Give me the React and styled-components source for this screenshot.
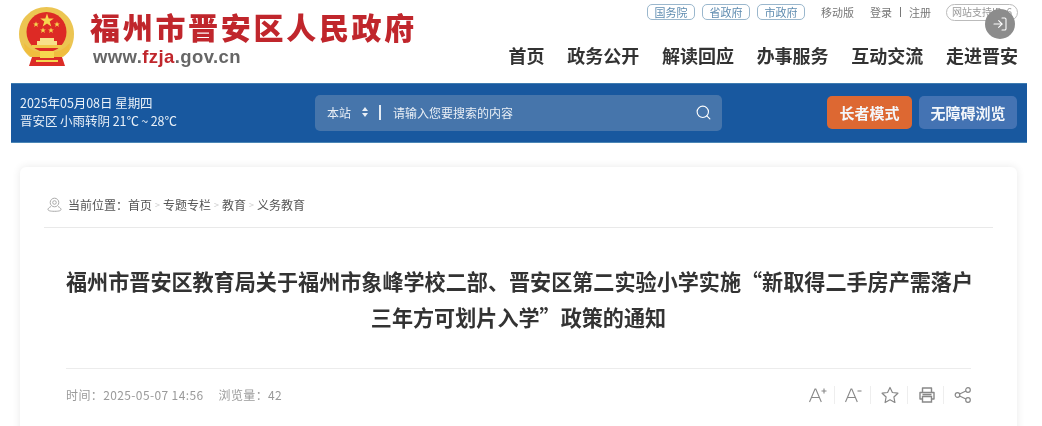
import React from "react";
import styled, { createGlobalStyle } from "styled-components";
import { LogIn, Search } from "lucide-react";

const Global = createGlobalStyle`
  html, body { margin: 0; padding: 0; background: #fff; overflow: hidden; }
  * { box-sizing: border-box; }
  body { font-family: "Liberation Sans", "Noto Sans CJK SC", sans-serif; }
`;
const Page = styled.div`
  width: 1042px; height: 426px; overflow: hidden; position: relative; background: #fff;
  filter: blur(0.45px);
`;
const Header = styled.header`
  height: 83px; padding: 0 24px 0 19px; display: flex; justify-content: space-between;
`;
const Brand = styled.div`
  display: flex; gap: 15px; padding-top: 7px;
`;
const BrandText = styled.div`
  display: flex; flex-direction: column;
`;
const SiteName = styled.div`
  font: 900 30px/38px "Noto Sans CJK SC", sans-serif; color: #c0262c; letter-spacing: 2.7px; white-space: nowrap;
`;
const SiteUrl = styled.div`
  font: 700 18.5px/24px "Liberation Sans", sans-serif; color: #666; margin: 0 0 0 3px; letter-spacing: 0.4px;
  b { color: #c0262c; }
`;
const HeaderRight = styled.div`
  display: flex; flex-direction: column; align-items: flex-end;
`;
const TopLinks = styled.div`
  display: flex; align-items: center; height: 24px; font-size: 11px; color: #777;
  font-family: "Noto Sans CJK SC", sans-serif;
`;
const GovPill = styled.a`
  width: 48px; height: 16px; border: 1px solid #9ab7cd; border-radius: 5px; color: #5f8cb0;
  display: flex; align-items: center; justify-content: center; margin-right: 7px; line-height: 1;
`;
const TopText = styled.a`
  margin-left: ${(p) => p.$ml}px; white-space: nowrap; color: #777; line-height: 1;
`;
const Sep = styled.i`
  width: 1px; height: 10px; background: #777; margin: 0 8px;
`;
const SupportPill = styled.a`
  width: 72px; height: 17px; margin-left: 15px; border: 1px solid #bbb; border-radius: 9px;
  font-size: 10px; color: #999; display: flex; align-items: center; justify-content: center; white-space: nowrap; line-height: 1;
`;
const Nav = styled.nav`
  display: flex; gap: 22.7px; margin: 19px 0 0 0; font: 700 18px/24px "Noto Sans CJK SC", sans-serif; color: #333;
`;
const FloatBtn = styled.div`
  position: absolute; left: 985px; top: 9px; width: 30px; height: 30px; border-radius: 50%;
  background: #8c8c8c; display: flex; align-items: center; justify-content: center; color: #fff;
`;
const Bar = styled.div`
  margin: 0 15px 0 11px; height: 60px; background: #18589f; display: flex; align-items: center; padding: 0 10px 2px 9px;
  font-family: "Noto Sans CJK SC", sans-serif; border-bottom: 1px solid #4b86b5; border-top: 1px solid #3d7bb0;
`;
const DateBox = styled.div`
  width: 295px; color: #eaf1f8; font-size: 12.5px; line-height: 18px; white-space: nowrap; letter-spacing: -0.05px;
`;
const SearchBox = styled.div`
  width: 407px; height: 36px; margin-top: 2px; background: #4675ab; border-radius: 5px; display: flex; align-items: center;
  padding: 0 10px 2px 12px; color: #e8eef5; font-size: 12px;
`;
const Scope = styled.span`
  width: 24px; white-space: nowrap;
`;
const Updown = styled.svg`
  margin-left: 11px; width: 6px; height: 10px;
`;
const Divider = styled.i`
  width: 2px; height: 15px; background: #e4ecf4; margin: 0 12px 0 11px;
`;
const Placeholder = styled.span`
  flex: 1; color: #e8eef5;
`;
const Mode = styled.div`
  height: 33px; width: ${(p) => p.$w}px; margin-left: ${(p) => p.$ml}px; border-radius: 5px; background: ${(p) => p.$bg};
  color: #fff; font-weight: 700; font-size: 15px; display: flex; align-items: center; justify-content: center; white-space: nowrap; opacity: .95;
`;
const Card = styled.main`
  margin: 24px 25px 0 20px; height: 300px; border-radius: 6px 6px 0 0; background: #fff;
  box-shadow: 0 0 8px rgba(0,0,0,.09); padding: 0 24px;
  font-family: "Noto Sans CJK SC", sans-serif;
`;
const Crumbs = styled.div`
  height: 61px; padding: 15px 0 0 3px; border-bottom: 1px solid #e9e9e9; display: flex; align-items: center; font-size: 12px; color: #555;
`;
const CrumbSep = styled.span`
  color: #ccc; font-size: 9px; width: 11px; text-align: center;
`;
const PinIcon = styled.svg`
  margin-right: 6px; flex: none;
`;
const Title = styled.h1`
  margin: 35px 22px 0; font-size: 21.1px; line-height: 36px; font-weight: 700; text-align: center; color: #333;
  height: 106px; border-bottom: 1px solid #ececec; white-space: nowrap;
`;
const Meta = styled.div`
  margin: 0 22px; height: 50px; display: flex; align-items: center; justify-content: space-between; font-size: 12px; color: #9a9a9a;
`;
const MetaInfo = styled.div`
  display: flex; gap: 15px; letter-spacing: 0.38px;
`;
const Tools = styled.div`
  display: flex; align-items: center; margin-top: 2px;
`;
const Tool = styled.span`
  display: flex; align-items: center; height: 18px; width: ${(p) => (p.$first ? 25.5 : p.$last ? 28 : 36.3)}px;
  padding-left: ${(p) => (p.$first ? 0 : 10)}px;
  border-left: ${(p) => (p.$first ? "none" : "1px solid #eee")};
`;
const Icon = styled.svg`
  display: block; flex: none;
`;

const Emblem = () => (
  <svg width="56" height="60" viewBox="0 0 56 60">
    <path d="M27.500 0C12 0 0 12 0 27c0 10 5 18 11 23h33c7-5 11-13 11-23C55 12 43 0 27.500 0z" fill="#ecc552" />
    <circle cx="27.500" cy="25" r="20" fill="#dd2a25" />
    <g fill="#f6d64f">
      <path d="M28 6.500l1.700 4.900h5.100l-4.100 3.100 1.600 4.900-4.300-3-4.300 3 1.600-4.900-4.100-3.100h5.100z" />
      <path d="M17 14.500l.8 2h2.100l-1.700 1.300.7 2.100-1.900-1.300-1.900 1.300.7-2.100-1.700-1.300h2.100z" />
      <path d="M38 14.500l.8 2h2.100l-1.700 1.300.7 2.100-1.900-1.300-1.900 1.300.7-2.100-1.700-1.300h2.100z" />
      <path d="M24 20.500l.8 2h2.100l-1.700 1.300.7 2.100-1.900-1.300-1.900 1.300.7-2.100-1.700-1.300h2.100z" />
      <path d="M32 20.500l.8 2h2.100l-1.700 1.300.7 2.100-1.900-1.300-1.900 1.300.7-2.100-1.700-1.300h2.100z" />
    </g>
    <path d="M21 31h14v3h3v4H18v-4h3z" fill="#f8e08a" />
    <path d="M13 38h30v3H13z" fill="#f3c84a" />
    <path d="M5 36c5 6 11 9 17 9h12c6 0 11-3 17-9l-1 8c-4 5-10 7-16 7H22c-6 0-12-2-16-7z" fill="#f0bd3e" />
    <path d="M13 50h30l3 9H10z" fill="#dc2c26" />
    <path d="M21 44h14v7H21z" fill="#f6d64f" />
    <path d="M17 53h22v2H17z" fill="#f6d64f" />
  </svg>
);

const AIcon = ({ minus }) => (
  <Icon width="18" height="18" viewBox="0 0 18 18" fill="none" stroke="#888" strokeWidth="1.100">
    <path d="M0.500 16L6 3h.8l5.500 13M2.500 11.500h8" />
    {minus ? <path d="M12.500 5h4" /> : <path d="M12.500 5h5M15 2.500v5" />}
  </Icon>
);
const Star = () => (
  <Icon width="18" height="18" viewBox="0 0 18 18" fill="none" stroke="#888" strokeWidth="1.200">
    <path d="M9 1.500l2.400 5 5.500.7-4 3.800 1 5.500L9 13.800 4.100 16.500l1-5.500-4-3.800 5.500-.7z" strokeLinejoin="round" />
  </Icon>
);
const Printer = () => (
  <Icon width="18" height="18" viewBox="0 0 18 18" fill="none" stroke="#888" strokeWidth="1.400">
    <path d="M4.500 6V2h9v4M4.500 13H2V6.500h14V13h-2.500" strokeLinejoin="round" />
    <path d="M4.500 10.500h9V16h-9zM4.500 8.500h9" />
  </Icon>
);
const Share = () => (
  <Icon width="18" height="18" viewBox="0 0 18 18" fill="none" stroke="#888" strokeWidth="1.200">
    <circle cx="3.500" cy="9" r="2.300" /><circle cx="14" cy="4" r="2.300" /><circle cx="14" cy="14" r="2.300" />
    <path d="M5.600 8l6.300-3M5.600 10l6.300 3" />
  </Icon>
);
const Chevron = () => <CrumbSep>&gt;</CrumbSep>;

export default function App() {
  return (
    <Page>
      <Global />
      <Header>
        <Brand>
          <Emblem />
          <BrandText>
            <SiteName>福州市晋安区人民政府</SiteName>
            <SiteUrl>www.<b>fzja</b>.gov.cn</SiteUrl>
          </BrandText>
        </Brand>
        <HeaderRight>
          <TopLinks>
            <GovPill>国务院</GovPill>
            <GovPill>省政府</GovPill>
            <GovPill>市政府</GovPill>
            <TopText $ml={9}>移动版</TopText>
            <TopText $ml={16}>登录</TopText>
            <Sep />
            <TopText $ml={0}>注册</TopText>
            <SupportPill>网站支持IPv6</SupportPill>
          </TopLinks>
          <Nav>
            <span>首页</span>
            <span>政务公开</span>
            <span>解读回应</span>
            <span>办事服务</span>
            <span>互动交流</span>
            <span>走进晋安</span>
          </Nav>
        </HeaderRight>
      </Header>
      <FloatBtn><LogIn size={16} strokeWidth={1.6} /></FloatBtn>
      <Bar>
        <DateBox>
          <div>2025年05月08日 星期四</div>
          <div>晋安区 小雨转阴 21℃&#8201;~&#8201;28℃</div>
        </DateBox>
        <SearchBox>
          <Scope>本站</Scope>
          <Updown viewBox="0 0 6 10"><path d="M3 0l3 4H0zM3 10l3-4H0z" fill="#e8eef5" /></Updown>
          <Divider />
          <Placeholder>请输入您要搜索的内容</Placeholder>
          <Search size={17} strokeWidth={1.6} color="#fff" />
        </SearchBox>
        <Mode $w={85} $ml={105} $bg="#e8692d">长者模式</Mode>
        <Mode $w={98} $ml={7} $bg="#4775b5">无障碍浏览</Mode>
      </Bar>
      <Card>
        <Crumbs>
          <PinIcon width="15" height="15" viewBox="0 0 15 15" fill="none" stroke="#aaa" strokeWidth="1">
            <circle cx="7.500" cy="5.500" r="4.300" />
            <circle cx="7.500" cy="5.500" r="1.800" />
            <path d="M4 9.500C2 10.500 1 11.500 1 12.500c0 1 1.500 1.800 6.500 1.800s6.500-.8 6.500-1.800c0-1-1-2-3-3" />
          </PinIcon>
          当前位置：首页<Chevron />专题专栏<Chevron />教育<Chevron />义务教育
        </Crumbs>
        <Title>
          福州市晋安区教育局关于福州市象峰学校二部、晋安区第二实验小学实施“新取得二手房产需落户
          <br />
          三年方可划片入学”政策的通知
        </Title>
        <Meta>
          <MetaInfo>
            <span>时间：2025-05-07 14:56</span>
            <span>浏览量：42</span>
          </MetaInfo>
          <Tools>
            <Tool $first><AIcon /></Tool>
            <Tool><AIcon minus /></Tool>
            <Tool><Star /></Tool>
            <Tool><Printer /></Tool>
            <Tool $last><Share /></Tool>
          </Tools>
        </Meta>
      </Card>
    </Page>
  );
}
